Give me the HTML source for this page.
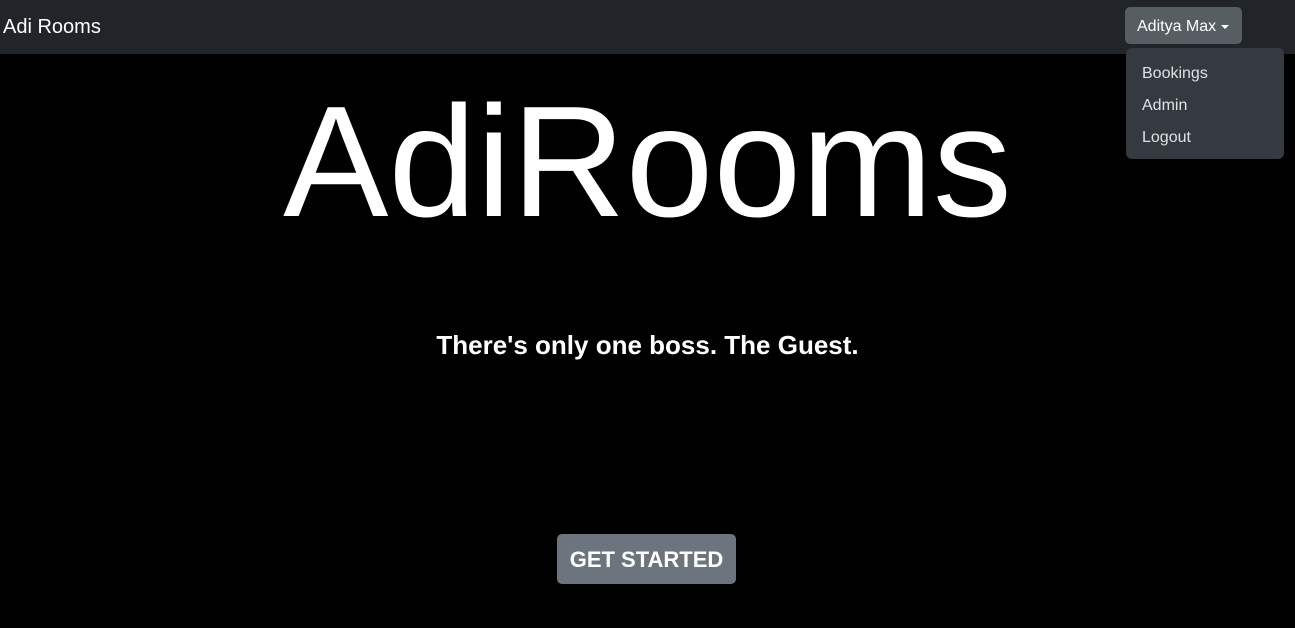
<!DOCTYPE html>
<html><head><style>
body{margin:0;width:1295px;height:628px;background:#000;font-family:"Liberation Sans",sans-serif;color:#fff;position:relative;overflow:hidden}
.nav{position:absolute;left:0;top:0;width:1295px;height:54px;background:#212529}
.brand{position:absolute;left:3px;top:16px;font-size:20px}
.dd{position:absolute;left:1125px;top:7px;width:117px;height:37px;background:#565e64;border-radius:5px;font-size:16px;line-height:39px;box-sizing:border-box;padding-left:12px}
.dd:after{content:"";position:absolute;right:13px;top:18px;border-left:4px solid transparent;border-right:4px solid transparent;border-top:4px solid #fff}
.menu{position:absolute;left:1126px;top:48px;width:158px;height:111px;background:#343a40;border-radius:6px;font-size:16px;color:#dee2e6}
.menu div{position:absolute;left:16px}
h1{position:absolute;left:0;width:1295px;text-align:center;top:72px;margin:0;font-size:158px;font-weight:normal;line-height:180px}
.sub{position:absolute;left:0;width:1295px;text-align:center;top:330px;font-size:26px;font-weight:bold}
.btn{position:absolute;left:557px;top:534px;width:179px;height:50px;background:#6c757d;border-radius:5px;text-align:center;line-height:52px;font-size:22px;font-weight:bold}
</style></head><body>
<div class="nav"><div class="brand">Adi Rooms</div><div class="dd">Aditya Max</div></div>
<div class="menu"><div style="top:17px">Bookings</div><div style="top:49px">Admin</div><div style="top:81px">Logout</div></div>
<h1>AdiRooms</h1>
<div class="sub">There's only one boss. The Guest.</div>
<div class="btn">GET STARTED</div>
</body></html>
